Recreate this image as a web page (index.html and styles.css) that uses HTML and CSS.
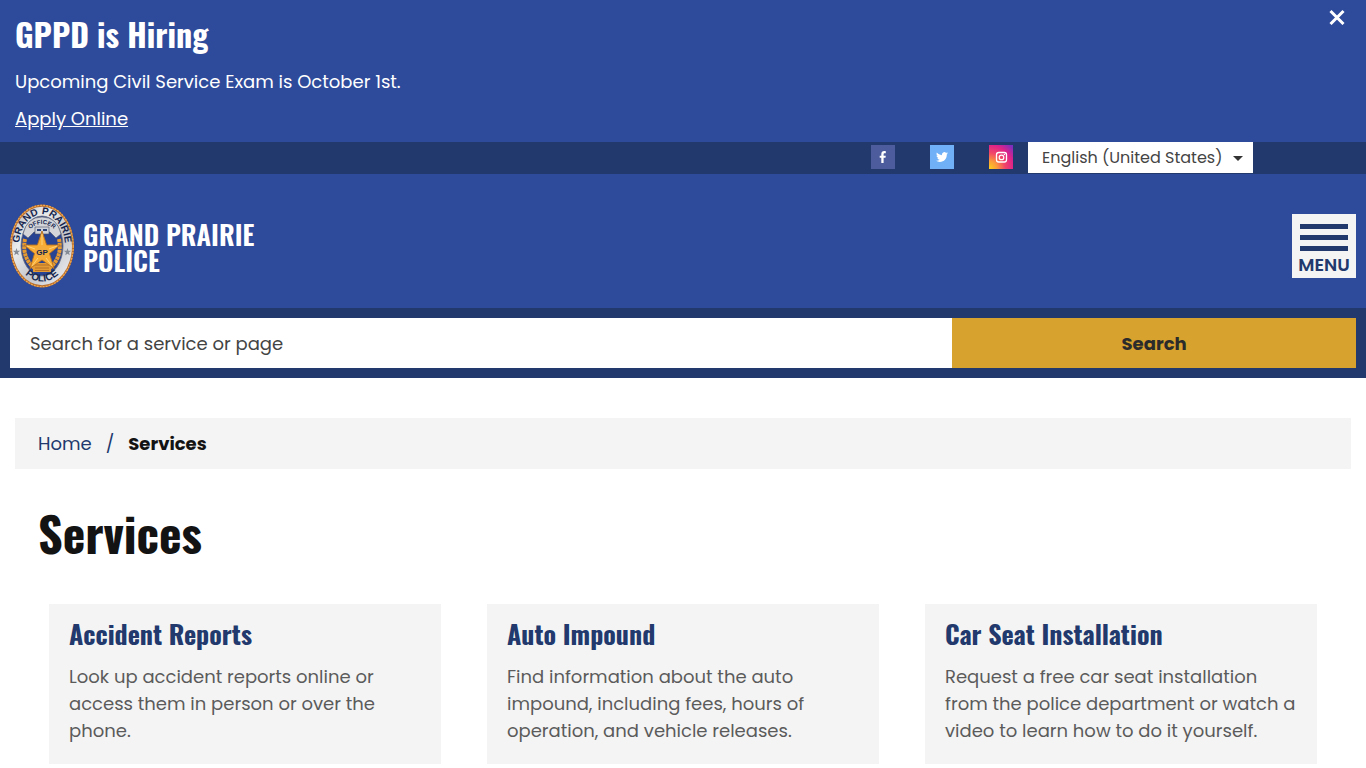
FILE: index.html
```html
<!DOCTYPE html>
<html lang="en">
<head>
<meta charset="UTF-8">
<meta name="viewport" content="width=device-width, initial-scale=1.0">
<title>Services - Grand Prairie Police</title>
<link rel="stylesheet" href="styles.css">
</head>
<body>
<section class="alert">
  <h2 class="alert-title">GPPD is Hiring</h2>
  <p>Upcoming Civil Service Exam is October 1st.</p>
  <p><a href="#">Apply Online</a></p>
  <button class="alert-close" type="button" aria-label="Close">
    <svg width="16" height="16" viewBox="0 0 16 16"><path d="M1.500 2l13 13M14.500 2l-13 13" stroke="#fff" stroke-width="3"/></svg>
  </button>
</section>

<div class="topbar">
  <div class="topbar-inner">
    <div class="social">
      <a href="#" aria-label="Facebook">
        <svg width="24" height="24" viewBox="0 0 24 24">
          <rect width="24" height="24" fill="#4c5c9d"/>
          <path d="M10.300 18v-5.200H8.700v-2.100h1.600V9.200c0-2.100 1-3.100 3-3.100.6 0 1.100.1 1.500.2v1.900h-1c-.9 0-1.200.4-1.200 1.200v1.300h2.200l-.3 2.100h-1.900V18z" fill="#fff"/>
        </svg>
      </a>
      <a href="#" aria-label="Twitter">
        <svg width="24" height="24" viewBox="0 0 24 24">
          <rect width="24" height="24" fill="#6fb0f6"/>
          <path transform="translate(6 6) scale(.5)" d="M23.950 4.570a10 10 0 0 1-2.820.77 4.960 4.960 0 0 0 2.160-2.720c-.95.55-2 .95-3.130 1.180a4.920 4.920 0 0 0-8.380 4.480C7.690 8.090 4.070 6.130 1.640 3.160a4.920 4.920 0 0 0 1.520 6.570 4.900 4.900 0 0 1-2.230-.61v.06a4.920 4.920 0 0 0 3.950 4.830 5 5 0 0 1-2.210.08 4.940 4.940 0 0 0 4.600 3.420A9.870 9.870 0 0 1 0 19.540a14 14 0 0 0 7.550 2.210c9.050 0 14-7.500 14-13.980 0-.21 0-.42-.02-.63a9.940 9.940 0 0 0 2.460-2.550z" fill="#fff"/>
        </svg>
      </a>
      <a href="#" aria-label="Instagram">
        <svg width="24" height="24" viewBox="0 0 24 24">
          <defs>
            <radialGradient id="insta" cx="0" cy="1" r="1.350">
              <stop offset="0" stop-color="#fdd21c"/>
              <stop offset=".25" stop-color="#fb9b3a"/>
              <stop offset=".5" stop-color="#f24668"/>
              <stop offset=".75" stop-color="#dc2389"/>
              <stop offset="1" stop-color="#7a2fc0"/>
            </radialGradient>
          </defs>
          <rect width="24" height="24" fill="url(#insta)"/>
          <rect x="7.500" y="7.500" width="10" height="9.500" rx="2.200" fill="none" stroke="#fff" stroke-width="1.300"/>
          <circle cx="12.500" cy="12.400" r="2.300" fill="none" stroke="#fff" stroke-width="1.200"/>
          <circle cx="15.400" cy="9.500" r=".7" fill="#fff"/>
        </svg>
      </a>
    </div>
    <div class="language">
      <select aria-label="Language">
        <option>English (United States)</option>
        <option>Español</option>
      </select>
    </div>
  </div>
</div>

<header class="header">
  <a class="brand" href="#">
    <svg class="badge" width="65" height="84" viewBox="1 0 65 84" aria-hidden="true">
      <defs>
        <linearGradient id="silver" x1="0" y1="0" x2="1" y2="1">
          <stop offset="0" stop-color="#a9adb6"/>
          <stop offset=".3" stop-color="#eceded"/>
          <stop offset=".6" stop-color="#c3c6cc"/>
          <stop offset="1" stop-color="#f4f4f5"/>
        </linearGradient>
        <path id="arcTop" d="M10.500 49A23 32 0 1 1 55.500 49"/>
        <path id="arcBottom" d="M8 58A28.500 37.500 0 0 0 58 58"/>
        <path id="arcOfficer" d="M17 29Q33 11 49 29"/>
      </defs>
      <ellipse cx="33" cy="42" rx="32" ry="41.500" fill="#b96d2b"/>
      <ellipse cx="33" cy="42" rx="31.200" ry="40.700" fill="none" stroke="#efa84f" stroke-width="1.300" stroke-dasharray="2 1"/>
      <ellipse cx="33" cy="42" rx="30" ry="39.300" fill="url(#silver)"/>
      <ellipse cx="33" cy="42" rx="21" ry="30" fill="#284391" stroke="#6d7180" stroke-width=".8"/>
      <path d="M14 30q4-17 19-17 15 0 19 17l-5 4-6-6H25l-6 6z" fill="#d3d5d9" stroke="#4b526a" stroke-width=".6"/>
      <path d="M26 23h14v7H26z" fill="#cfd2d8" stroke="#4b526a" stroke-width=".6"/>
      <path d="M28 25h4v2h-4zM34 25h4v2h-4z" fill="#2b4379"/>
      <path d="M16 35q-4 20 12 31M50 35q4 20-12 31" fill="none" stroke="#e79a30" stroke-width="4" stroke-dasharray="3 .6"/>
      <path d="M24 59h18v9H24z" fill="#e39a35"/>
      <path d="M26 61h14M26 64h14M26 66.500h14" stroke="#a55f20" stroke-width=".7"/>
      <path d="M33 27l4.600 14H51L40.500 49.500l4.500 15L33 56 21 64.500l4.500-15L15 41h13.400z" fill="#f9ad35" stroke="#b9701f" stroke-width=".9"/>
      <path d="M33 30v11M18 42l8 3M48 42l-8 3M23 62l6-8M43 62l-6-8" stroke="#fcd27c" stroke-width="1"/>
      <circle cx="33" cy="48" r="6.500" fill="#f4ad3d"/>
      <path d="M7.500 44l.9 2.700h2.800l-2.200 1.800.8 2.800-2.300-1.600-2.300 1.600.8-2.800-2.200-1.800h2.800zM58.500 44l.9 2.700h2.800l-2.200 1.800.8 2.800-2.300-1.600-2.300 1.600.8-2.800-2.200-1.800h2.800z" fill="#858b95"/>
      <text class="badge-name"><textPath href="#arcTop" startOffset="50%">GRAND PRAIRIE</textPath></text>
      <text class="badge-name"><textPath href="#arcBottom" startOffset="50%">POLICE</textPath></text>
      <text class="badge-rank"><textPath href="#arcOfficer" startOffset="50%">OFFICER</textPath></text>
      <text class="badge-gp" x="33" y="51">GP</text>
    </svg>
    <span class="brand-name">GRAND PRAIRIE<br>POLICE</span>
  </a>
  <button class="menu" type="button">
    <span class="menu-bar"></span>
    <span class="menu-bar"></span>
    <span class="menu-bar"></span>
    <span class="menu-text">MENU</span>
  </button>
</header>

<form class="search">
  <input type="text" placeholder="Search for a service or page" aria-label="Search for a service or page">
  <button type="submit">Search</button>
</form>

<main>
  <nav class="breadcrumb" aria-label="Breadcrumb">
    <a href="#">Home</a>
    <span class="slash">/</span>
    <strong>Services</strong>
  </nav>
  <h1>Services</h1>
  <div class="cards">
    <article class="card">
      <h2><a href="#">Accident Reports</a></h2>
      <p>Look up accident reports online or access them in person or over the phone.</p>
    </article>
    <article class="card">
      <h2><a href="#">Auto Impound</a></h2>
      <p>Find information about the auto impound, including fees, hours of operation, and vehicle releases.</p>
    </article>
    <article class="card">
      <h2><a href="#">Car Seat Installation</a></h2>
      <p>Request a free car seat installation from the police department or watch a video to learn how to do it yourself.</p>
    </article>
  </div>
</main>
</body>
</html>
```
FILE: styles.css
```css
* {
  box-sizing: border-box;
}
body {
  margin: 0;
  font-family: Poppins, Inter, sans-serif;
  font-size: 18px;
  line-height: 27px;
  color: #131313;
  background: #fff;
}
h1, h2, p {
  margin: 0;
}
h1, h2, .brand-name {
  font-family: Oswald, "Roboto Condensed", "Liberation Sans Narrow", sans-serif;
  font-weight: 700;
}
button, input, select {
  font-family: inherit;
  border: 0;
  border-radius: 0;
}
button {
  cursor: pointer;
}

.alert {
  position: relative;
  padding: 14px 15px 10px;
  background: #2e4b9b;
  color: #fff;
}
.alert-title {
  font-size: 32px;
  line-height: 40px;
  margin-bottom: 14px;
}
.alert p + p {
  margin-top: 10px;
}
.alert a {
  color: #fff;
}
.alert-close {
  position: absolute;
  top: 5px;
  right: 17px;
  width: 24px;
  height: 24px;
  padding: 4px;
  background: none;
}
.alert-close svg, .social svg {
  display: block;
}

.topbar {
  background: #21396d;
}
.topbar-inner {
  display: flex;
  justify-content: flex-end;
  max-width: 1140px;
  height: 32px;
  margin: 0 auto;
}
.social {
  display: flex;
  gap: 35px;
  padding-top: 3px;
  margin-right: 15px;
}
.language {
  position: relative;
  width: 225px;
  height: 31px;
}
.language select {
  appearance: none;
  width: 100%;
  height: 100%;
  padding: 0 14px;
  background: #fff;
  color: #444;
  font-size: 16px;
}
.language::after {
  content: "";
  position: absolute;
  top: 14px;
  right: 10px;
  border: 5px solid transparent;
  border-top-color: #333;
  border-bottom: 0;
  pointer-events: none;
}

.header {
  display: flex;
  justify-content: space-between;
  align-items: center;
  padding: 30px 10px 20px;
  background: #2e4b9b;
}
.brand {
  display: flex;
  align-items: center;
  gap: 8px;
  color: #fff;
  text-decoration: none;
}
.brand-name {
  font-size: 27px;
  line-height: 26px;
  font-weight: 600;
  padding-top: 2px;
}
.badge text {
  text-anchor: middle;
  fill: #16264f;
  font-family: "Liberation Sans", sans-serif;
  font-weight: 700;
}
.badge .badge-name {
  font-size: 10px;
}
.badge .badge-rank {
  font-size: 6px;
}
.badge .badge-gp {
  font-size: 8px;
}
.menu {
  display: flex;
  flex-direction: column;
  align-items: center;
  gap: 6px;
  width: 64px;
  height: 64px;
  padding: 10px 0 0;
  background: #f4f4f4;
  color: #21396d;
}
.menu-bar {
  width: 48px;
  height: 5px;
  background: #21396d;
}
.menu-text {
  font-size: 18px;
  line-height: 16px;
  font-weight: 600;
}

.search {
  display: flex;
  padding: 10px;
  background: #21396d;
}
.search input {
  flex: 1;
  min-width: 0;
  height: 50px;
  padding: 0 20px;
  background: #fff;
  color: #444;
  font-size: 18px;
}
.search input::placeholder {
  color: #444;
  opacity: 1;
}
.search button {
  width: 30%;
  background: #d8a22e;
  color: #2b2b2b;
  font-size: 18px;
  font-weight: 700;
}

main {
  padding: 40px 15px;
}
.breadcrumb {
  display: flex;
  gap: 14px;
  padding: 12px 23px;
  background: #f4f4f4;
}
.breadcrumb a, .slash {
  color: #21396d;
}
.breadcrumb a {
  text-decoration: none;
}
.breadcrumb strong {
  font-weight: 700;
}
h1 {
  margin: 28px 23px 36px;
  font-size: 48px;
  line-height: 71px;
}
.cards {
  display: grid;
  grid-template-columns: repeat(3, 1fr);
  gap: 46px;
  margin: 0 34px;
}
.card {
  min-height: 160px;
  padding: 12px 20px 20px;
  background: #f4f4f4;
}
.card h2 {
  margin-bottom: 12px;
  font-size: 26px;
  line-height: 35px;
}
.card a {
  color: #21396d;
  text-decoration: none;
}
.card p {
  color: #5b5b5b;
}
```
